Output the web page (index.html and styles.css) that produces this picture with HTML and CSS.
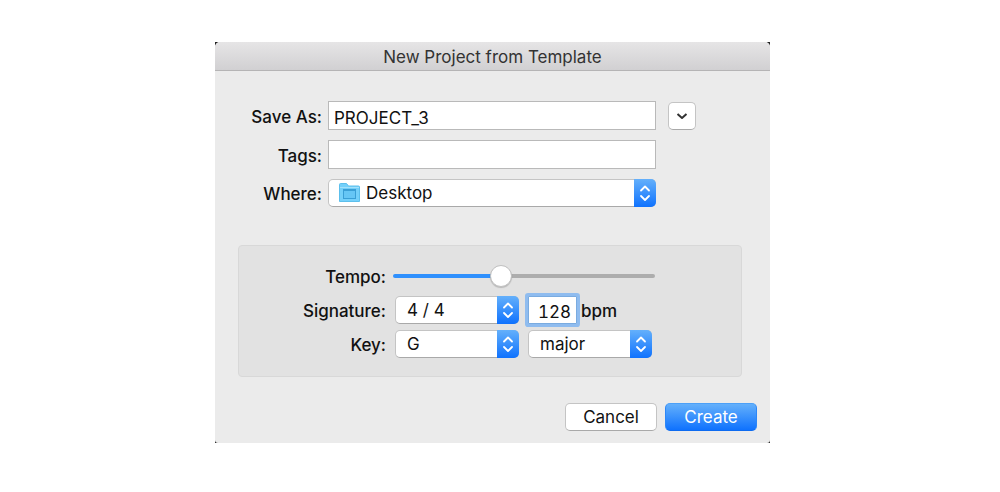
FILE: index.html
```html
<!DOCTYPE html>
<html lang="en">
  <head>
    <meta charset="UTF-8" />
    <meta name="viewport" content="width=device-width, initial-scale=1.0" />
    <title>New Project from Template</title>
    <link rel="stylesheet" href="styles.css">
  </head>
  <body>
    <!-- Shared icon for the drop-downs -->
    <svg class="sprite" aria-hidden="true">
      <symbol id="arrows" viewBox="0 0 22 28">
        <path d="M7 11.500l4-4 4 4M7 17l4 4 4-4" fill="none" stroke="#fff" stroke-width="1.800" stroke-linecap="round" stroke-linejoin="round" />
      </symbol>
    </svg>

    <div class="frame">
      <form class="dialog" onsubmit="return false;">
        <h1 class="title">New Project from Template</h1>

        <!-- File name and location -->
        <div class="file">
          <label for="name">Save As:</label>
          <input class="text" type="text" id="name" value="PROJECT_3" />
          <button class="expand" type="button" aria-label="Show folders">
            <svg width="12" height="8" viewBox="0 0 12 8">
              <path d="M1.500 2l4.500 4 4.500-4" fill="none" stroke="#333" stroke-width="2" stroke-linejoin="round" />
            </svg>
          </button>

          <label for="tags">Tags:</label>
          <input class="text" type="text" id="tags" />

          <label class="row-start" for="where">Where:</label>
          <div class="select with-icon">
            <svg class="folder" width="21" height="19" viewBox="0 0 21 19">
              <path d="M0.500 18.500v-17q0-1 1-1h6l2 2.500h10q1 0 1 1v14.500z" fill="#74d0fa" stroke="#5cbfec" />
              <path d="M1 4.500h19" stroke="#a3e1fb" />
              <rect x="4.500" y="6.500" width="12" height="9" fill="#66c6f5" stroke="#3a9fd6" />
              <path d="M5 7.500h11" stroke="#3a9fd6" />
            </svg>
            <select id="where">
              <option>Desktop</option>
            </select>
            <svg class="arrows"><use href="#arrows" /></svg>
          </div>
        </div>

        <!-- Musical settings -->
        <div class="music">
          <label for="tempo">Tempo:</label>
          <input class="slider" type="range" id="tempo" min="20" max="286" value="128" />

          <label for="signature">Signature:</label>
          <div class="select">
            <select id="signature">
              <option>4 / 4</option>
            </select>
            <svg class="arrows"><use href="#arrows" /></svg>
          </div>
          <div class="tempo-value">
            <input class="bpm" type="text" id="bpm" value="128" />
            <label for="bpm">bpm</label>
          </div>

          <label for="key">Key:</label>
          <div class="select">
            <select id="key">
              <option>G</option>
            </select>
            <svg class="arrows"><use href="#arrows" /></svg>
          </div>
          <div class="select">
            <select aria-label="Scale">
              <option>major</option>
            </select>
            <svg class="arrows"><use href="#arrows" /></svg>
          </div>
        </div>

        <!-- Buttons -->
        <div class="actions">
          <button class="button" type="button">Cancel</button>
          <button class="button primary" type="submit">Create</button>
        </div>
      </form>
    </div>
  </body>
</html>
```
FILE: styles.css
```css
* {
  box-sizing: border-box;
}

body {
  margin: 0;
  padding: 42px 31px 42px 16px;
  background-color: #fff;
  color: #111;
  font-family: Inter, Roboto, sans-serif;
  font-size: 17px;
  line-height: 20px;
}

input,
select,
button {
  font: inherit;
  color: inherit;
  margin: 0;
}

label {
  padding-top: 2px;
  font-weight: 500;
  text-align: right;
}

.sprite {
  position: absolute;
  width: 0;
  height: 0;
}

/* Dark backing seen behind the rounded corners */
.frame {
  max-width: 555px;
  margin: 0 auto;
  background-color: #222;
}

.dialog {
  border-radius: 5px 5px 3px 3px;
  background-color: #ebebeb;
  overflow: hidden;
}

.title {
  margin: 0;
  padding: 5px 0 3px;
  border-bottom: 1px solid #b5b4b5;
  background: linear-gradient(#e6e5e6, #d1d0d2);
  color: #333;
  font-size: 17px;
  font-weight: 400;
  text-align: center;
}

/* File name and location */
.file {
  display: grid;
  grid-template-columns: 107px 1fr 34px;
  gap: 10px 6px;
  align-items: center;
  padding: 30px 74px 0 0;
}

.text {
  width: 100%;
  height: 29px;
  padding: 4px 5px 0;
  border: 1px solid #b9b9b9;
  border-radius: 0;
  background-color: #fff;
}

.expand {
  width: 28px;
  height: 28px;
  margin-left: 6px;
  padding: 0;
  border: 1px solid #c4c4c4;
  border-bottom-color: #a9a9a9;
  border-radius: 5px;
  background-color: #fff;
}

.expand svg {
  display: block;
  margin: 0 auto;
}

.row-start {
  grid-column: 1;
}

/* Drop-downs */
.select {
  position: relative;
}

.select select {
  display: block;
  width: 100%;
  height: 28px;
  padding: 0 28px 0 11px;
  border: 1px solid #c4c4c4;
  border-bottom-color: #a9a9a9;
  border-radius: 5px;
  background-color: #fff;
  appearance: none;
}

.with-icon select {
  padding-left: 37px;
}

.arrows {
  position: absolute;
  top: 0;
  right: 0;
  width: 22px;
  height: 28px;
  border-radius: 0 5px 5px 0;
  background: linear-gradient(#64b0fb, #0f72fe);
  pointer-events: none;
}

.folder {
  position: absolute;
  top: 4px;
  left: 11px;
  pointer-events: none;
}

/* Musical settings */
.music {
  display: grid;
  grid-template-columns: 147px 124px 124px;
  grid-auto-rows: 28px;
  gap: 6px 9px;
  align-items: center;
  margin: 38px 28px 0 23px;
  padding: 16px 0 18px;
  border: 1px solid #d8d8d8;
  border-radius: 4px;
  background-color: #e2e2e2;
}

.slider {
  grid-column: 2 / 4;
  justify-self: center;
  width: 262px;
  height: 24px;
  background: none;
  appearance: none;
}

.slider::-webkit-slider-runnable-track {
  height: 4px;
  border-radius: 2px;
  background: linear-gradient(to right, #2f90fd 41%, #adadad 41%);
}

.slider::-webkit-slider-thumb {
  width: 22px;
  height: 22px;
  margin-top: -9px;
  border: 1px solid #c0c0c0;
  border-radius: 50%;
  background-color: #fff;
  box-shadow: 0 1px 1px #0000002e;
  appearance: none;
}

.tempo-value {
  display: flex;
  align-items: center;
  gap: 4px;
}

.bpm {
  width: 49px;
  height: 28px;
  padding: 4px 0 0 4px;
  border: 1px solid #7aabe0;
  border-radius: 1px;
  background-color: #fff;
  box-shadow: 0 0 0 3px #8fbcef;
  font-variant-numeric: tabular-nums;
  text-align: center;
}

/* Buttons */
.actions {
  display: flex;
  justify-content: flex-end;
  gap: 8px;
  padding: 26px 13px 12px;
}

.button {
  width: 92px;
  height: 28px;
  padding: 0;
  border: 1px solid #c4c4c4;
  border-bottom-color: #a9a9a9;
  border-radius: 5px;
  background-color: #fff;
}

.primary {
  border-color: #4ba0f8 #2c87f8 #0d6bf0;
  background: linear-gradient(#64b0fb, #0f72fe);
  color: #fff;
}
```
